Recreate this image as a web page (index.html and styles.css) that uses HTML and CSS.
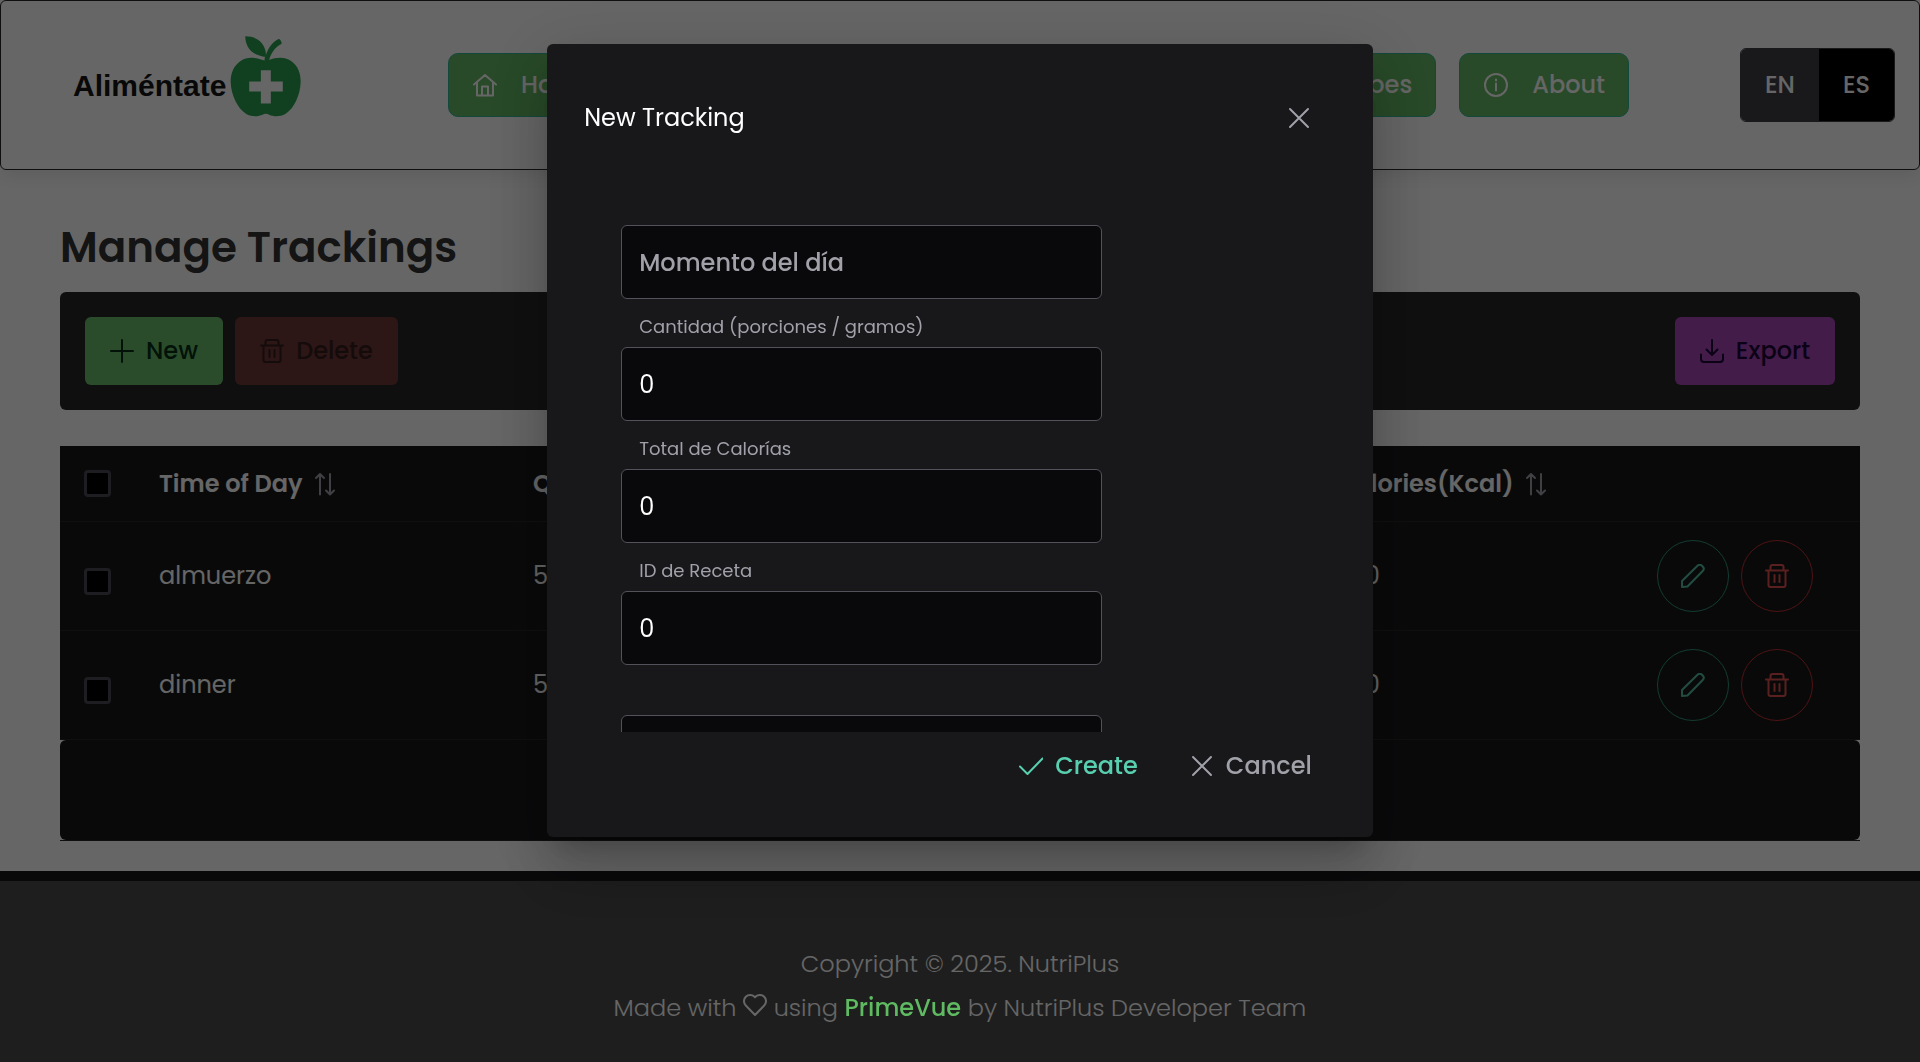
FILE: index.html
```html
<!DOCTYPE html>
<html lang="en">
<head>
<meta charset="utf-8">
<title>NutriPlus - Manage Trackings</title>
<link rel="stylesheet" href="styles.css">
</head>
<body>
<svg class="sprite" aria-hidden="true">
  <symbol id="i-home" viewBox="0 0 24 24"><path d="M1 11.500 12 2l11 9.500M4 9.500V22.500h16V9.500M9 22.500V13.500h6v9"/></symbol>
  <symbol id="i-info" viewBox="0 0 24 24"><circle cx="12" cy="12" r="11"/><path d="M12 10.500v7M12 6.500v1"/></symbol>
  <symbol id="i-plus" viewBox="0 0 24 24"><path d="M12 1v22M1 12h22"/></symbol>
  <symbol id="i-trash" viewBox="0 0 24 24"><path d="M1 6.500h22M3.500 6.500V21a2 2 0 0 0 2 2h13a2 2 0 0 0 2-2V6.500M5.500 6.500V3a2 2 0 0 1 2-2h9a2 2 0 0 1 2 2v3.500M9.500 11v7M14.500 11v7"/></symbol>
  <symbol id="i-download" viewBox="0 0 24 24"><path d="M12 1v15M6.500 10.500 12 16l5.500-5.500M1 15.500V20a3 3 0 0 0 3 3h16a3 3 0 0 0 3-3v-4.500"/></symbol>
  <symbol id="i-sort" viewBox="0 0 22 24"><path d="M6 22.500V2M2 6 6 2 10 6M16 2v20.500M12 18.500l4 4L20 18.500"/></symbol>
  <symbol id="i-pencil" viewBox="0 0 24 24"><path d="M1 23v-6L16.500 1.800a3.200 3.200 0 0 1 4.500 0l.700.700a3.200 3.200 0 0 1 0 4.500L6.500 22.500z"/></symbol>
  <symbol id="i-times" viewBox="0 0 24 24"><path d="M3 3l18 18M21 3L3 21"/></symbol>
  <symbol id="i-check" viewBox="0 0 24 24"><path d="M1 12.500 8.500 20 23.500 4.500"/></symbol>
  <symbol id="i-heart" viewBox="0 0 24 24"><path d="M12 23 2.800 13.500a6.200 6.200 0 0 1 0-8.800 6.200 6.200 0 0 1 8.700 0L12 5.300l.500-.600a6.200 6.200 0 0 1 8.700 0 6.200 6.200 0 0 1 0 8.800z"/></symbol>
</svg>

<header class="topbar">
  <a class="logo" href="#">
    <span class="logo-name">Aliméntate</span>
    <svg class="logo-mark" viewBox="505 45 220 248" aria-hidden="true">
      <path fill="#2aa04e" d="M612 121C588 112 560 108 540 122 518 137 510 160 510 185 511 225 531 266 556 281 575 292 594 289 606 284Q616 279 626 284C640 290 658 291 676 281 701 266 720 225 721 185 721 160 714 137 692 122 672 108 645 112 626 119 632 96 645 80 664 70Q663 60 656 55C636 64 624 82 617 102 614 108 612 114 612 121z"/>
      <path fill="#2aa04e" d="M554 48C582 48 600 59 609 76 616 89 617 98 616 110 590 107 570 97 561 78 556 68 554 58 554 48z"/>
      <path fill="#fff" d="M601 150h30v34h36v30h-36v36h-30v-36h-35v-30h35z"/>
    </svg>
  </a>
  <nav class="nav">
    <a class="nav-link" href="#"><svg class="icon"><use href="#i-home"/></svg>Home</a>
    <a class="nav-link push" href="#"><svg class="icon"><use href="#i-info"/></svg>Recipes</a>
    <a class="nav-link" href="#"><svg class="icon"><use href="#i-info"/></svg>About</a>
  </nav>
  <div class="lang" role="group" aria-label="Language">
    <button type="button">EN</button>
    <button type="button" class="active" aria-pressed="true">ES</button>
  </div>
</header>

<main class="page">
  <h1>Manage Trackings</h1>
  <div class="toolbar">
    <button type="button" class="btn btn-new"><svg class="icon"><use href="#i-plus"/></svg>New</button>
    <button type="button" class="btn btn-delete" disabled><svg class="icon"><use href="#i-trash"/></svg>Delete</button>
    <button type="button" class="btn btn-export"><svg class="icon"><use href="#i-download"/></svg>Export</button>
  </div>
  <table class="grid">
    <colgroup><col class="c-check"><col class="c-time"><col class="c-qty"><col class="c-cal"><col class="c-act"></colgroup>
    <thead>
      <tr>
        <th><input type="checkbox" aria-label="Select all"></th>
        <th><span class="sort">Time of Day<svg><use href="#i-sort"/></svg></span></th>
        <th><span class="sort">Quantity<svg><use href="#i-sort"/></svg></span></th>
        <th><span class="sort">Calories(Kcal)<svg><use href="#i-sort"/></svg></span></th>
        <th></th>
      </tr>
    </thead>
    <tbody>
      <tr>
        <td><input type="checkbox" aria-label="Select almuerzo"></td>
        <td>almuerzo</td><td>5</td><td>200</td>
        <td><div class="actions">
          <button type="button" class="round edit" aria-label="Edit"><svg class="icon"><use href="#i-pencil"/></svg></button>
          <button type="button" class="round remove" aria-label="Delete"><svg class="icon"><use href="#i-trash"/></svg></button>
        </div></td>
      </tr>
      <tr>
        <td><input type="checkbox" aria-label="Select dinner"></td>
        <td>dinner</td><td>5</td><td>200</td>
        <td><div class="actions">
          <button type="button" class="round edit" aria-label="Edit"><svg class="icon"><use href="#i-pencil"/></svg></button>
          <button type="button" class="round remove" aria-label="Delete"><svg class="icon"><use href="#i-trash"/></svg></button>
        </div></td>
      </tr>
    </tbody>
  </table>
  <div class="paginator-wrap"><div class="paginator"></div></div>
</main>

<footer class="footer">
  <p>Copyright © 2025. NutriPlus</p>
  <p>Made with <svg class="icon heart"><use href="#i-heart"/></svg> using <a href="#">PrimeVue</a> by NutriPlus Developer Team</p>
</footer>

<div class="mask">
  <div class="dialog" role="dialog" aria-modal="true" aria-labelledby="dialog-title">
    <div class="dialog-head">
      <h2 id="dialog-title">New Tracking</h2>
      <button type="button" class="close" aria-label="Close"><svg class="icon"><use href="#i-times"/></svg></button>
    </div>
    <form class="dialog-body">
      <input type="text" aria-label="Momento del día" placeholder="Momento del día">
      <label for="qty">Cantidad (porciones / gramos)</label>
      <input type="text" inputmode="numeric" id="qty" value="0">
      <label for="cal">Total de Calorías</label>
      <input type="text" inputmode="numeric" id="cal" value="0">
      <label for="recipe">ID de Receta</label>
      <input type="text" inputmode="numeric" id="recipe" value="0">
      <input class="last" type="text" aria-label="ID de Usuario">
    </form>
    <div class="dialog-foot">
      <button type="button" class="btn btn-create"><svg class="icon"><use href="#i-check"/></svg>Create</button>
      <button type="button" class="btn btn-cancel"><svg class="icon"><use href="#i-times"/></svg>Cancel</button>
    </div>
  </div>
</div>
</body>
</html>
```
FILE: styles.css
```css
* { box-sizing: border-box; }
body {
  margin: 0;
  min-height: 100vh;
  display: flex;
  flex-direction: column;
  background: #fff;
  font: 400 24px/36px Poppins, Inter, "Open Sans", sans-serif;
}
button, input { font: inherit; }
button { cursor: pointer; }
a { text-decoration: none; }
.sprite { display: none; }
.icon {
  width: 24px;
  height: 24px;
  flex: none;
}
.icon, .sort svg {
  fill: none;
  stroke: currentColor;
  stroke-width: 2;
  stroke-linecap: round;
  stroke-linejoin: round;
}

/* Top bar */
.topbar {
  display: flex;
  align-items: center;
  padding: 0 24px 0 72px;
  height: 170px;
  border: 1px solid #27272a;
  border-radius: 6px;
  box-shadow: 0 4px 20px rgba(0, 0, 0, .1);
}
.logo {
  display: flex;
  align-items: center;
  width: 375px;
  gap: 3px;
  padding-bottom: 18px;
}
.logo-name {
  color: #151515;
  font: 700 30px/36px "Liberation Sans", Arial, sans-serif;
  padding-top: 20px;
}
.logo-mark { width: 73px; height: 83px; }
.nav { flex: 1; display: flex; gap: 23px; }
.nav-link {
  display: flex;
  align-items: center;
  gap: 24px;
  height: 64px;
  padding: 0 23px 0 24px;
  border: 1px solid #34b399;
  border-radius: 10px;
  background: #64b964;
  color: #fff;
  font-weight: 500;
}
.nav .push { margin-left: auto; }
.lang {
  display: flex;
  margin-left: 111px;
  border: 1px solid #3f3f46;
  border-radius: 6px;
  overflow: hidden;
}
.lang button {
  height: 72px;
  padding: 0 24px;
  border: 0;
  background: #3f3f46;
  color: #fff;
  font-weight: 500;
}
.lang button.active { background: #000; }

/* Page */
.page { padding: 50px 60px 30px; }
h1 {
  margin: 0;
  padding-bottom: 16px;
  color: #333;
  font-size: 42px;
  line-height: 56px;
  font-weight: 600;
}
.toolbar {
  display: flex;
  gap: 12px;
  padding: 25px;
  margin-bottom: 36px;
  border-radius: 6px;
  background: #272727;
}
.btn {
  display: flex;
  align-items: center;
  justify-content: center;
  gap: 12px;
  height: 68px;
  padding: 0 24px;
  border: 0;
  border-radius: 6px;
  font-weight: 500;
}
.btn-new { background: #6bbe6b; color: #052e16; min-width: 138px; }
.btn-delete { background: #713737; color: #331c1c; min-width: 163px; }
.btn-export { background: #a846b9; color: #1c0538; min-width: 160px; margin-left: auto; }

.grid {
  width: 100%;
  table-layout: fixed;
  border-collapse: separate;
  border-spacing: 0;
  background: #18181b;
  color: #fff;
}
.c-check { width: 75px; }
.c-time { width: 374px; }
.c-cal { width: 321px; }
.c-act { width: 227px; }
.grid th, .grid td {
  padding: 0 24px;
  border-bottom: 1px solid #27272a;
  text-align: left;
}
.grid th { height: 76px; font-weight: 600; }
.grid td { height: 109px; }
.grid input {
  appearance: none;
  display: block;
  width: 27px;
  height: 27px;
  margin: 0;
  border: 3px solid #4b4b55;
  border-radius: 4px;
  background: #000;
}
.grid td input { margin-top: 10px; }
.sort { display: flex; align-items: center; gap: 11px; }
.sort svg {
  width: 22px;
  height: 24px;
  color: #a1a1aa;
}
.actions { display: flex; gap: 12px; }
.round {
  display: grid;
  place-items: center;
  flex: none;
  width: 72px;
  height: 72px;
  padding: 0;
  border: 1px solid;
  border-radius: 50%;
  background: transparent;
}
.edit { border-color: #2f957a; color: #58bfa3; }
.remove { border-color: #c03030; color: #e05252; }
.paginator-wrap { border-bottom: 1px solid #27272a; }
.paginator { height: 100px; border-radius: 6px; background: #18181b; }

/* Footer */
.footer {
  flex: 1;
  padding: 61px 24px 24px;
  border-top: 10px solid #18181b;
  background: #4b4b4b;
  color: #fff;
  text-align: center;
  font-weight: 300;
}
.footer p { margin: 0; line-height: 44px; }
.footer a {
  position: relative;
  z-index: 3;
  color: #5fba62;
  font-weight: 500;
}

/* Dialog */
.mask {
  position: fixed;
  inset: 0;
  z-index: 2;
  display: flex;
  align-items: flex-start;
  justify-content: center;
  padding-top: 44px;
  background: rgba(0, 0, 0, .6);
}
.dialog {
  width: 43%;
  border-radius: 6px;
  background: #18181b;
  color: #fff;
  box-shadow: 0 17px 23px -11px rgba(0, 0, 0, .2), 0 37px 58px 5px rgba(0, 0, 0, .14), 0 14px 70px 12px rgba(0, 0, 0, .12);
}
.dialog-head {
  display: flex;
  align-items: center;
  justify-content: space-between;
  padding: 37px;
}
.dialog h2 { margin: 0; font-size: 24px; font-weight: 400; }
.close {
  display: grid;
  place-items: center;
  width: 74px;
  height: 74px;
  padding: 0;
  border: 0;
  background: transparent;
  color: #a1a1aa;
}
.dialog-body {
  display: flex;
  flex-direction: column;
  max-height: 540px;
  padding: 33px 74px 0;
  overflow-y: auto;
  scrollbar-width: none;
}
.dialog-body input {
  flex: none;
  width: 481px;
  max-width: 100%;
  height: 74px;
  padding: 0 17px;
  border: 1px solid #52525b;
  border-radius: 6px;
  background: #09090b;
  color: #fff;
}
.dialog-body input::placeholder { color: #a1a1aa; font-weight: 500; }
.dialog-body label {
  padding: 16px 18px 8px;
  color: #a1a1aa;
  font-size: 18px;
  line-height: 24px;
}
.dialog-body .last { margin-top: 50px; }
.dialog-foot {
  display: flex;
  justify-content: flex-end;
  gap: 4px;
  padding: 0 37px 37px;
}
.dialog-foot .btn { background: transparent; }
.dialog-foot .btn-create { color: #58cfaf; }
.dialog-foot .btn-cancel { color: #a1a1aa; }
```
